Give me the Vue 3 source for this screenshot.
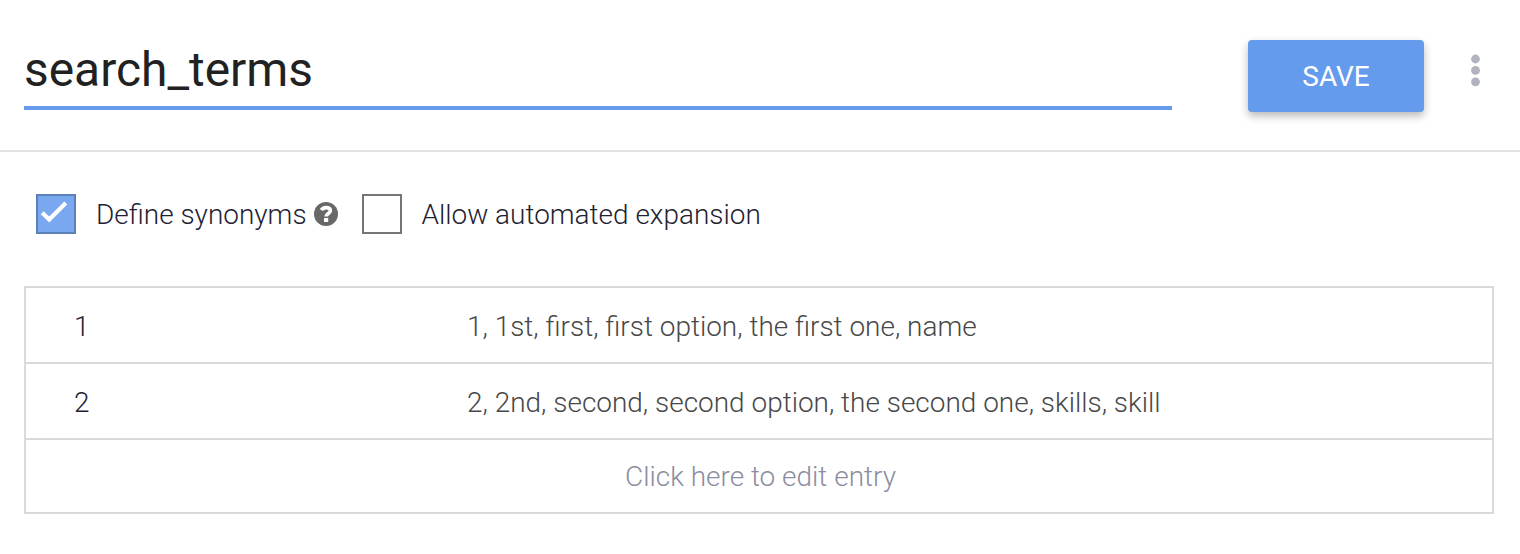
<script setup>
import { ref } from 'vue'

const name = 'search_terms'
const entries = ref([
  { value: '1', synonyms: '1, 1st, first, first option, the first one, name' },
  { value: '2', synonyms: '2, 2nd, second, second option, the second one, skills, skill' },
])
</script>

<template>
  <div class="page">
    <header class="head">
      <div class="title"><span>{{ name }}</span></div>
      <button class="save">SAVE</button>
      <svg class="more" width="12" height="36" viewBox="0 0 12 36">
        <circle cx="6.5" cy="6" r="4.4" />
        <circle cx="6.5" cy="17.4" r="4.4" />
        <circle cx="6.5" cy="28.8" r="4.4" />
      </svg>
    </header>
    <div class="options">
      <span class="box checked">
        <svg width="36" height="36" viewBox="0 0 36 36"><path d="M4.2 16.7 L11.2 23.5 L27.8 6.9" /></svg>
      </span>
      <span class="label define">Define synonyms</span>
      <svg class="help" width="24" height="24" viewBox="0 0 24 24">
        <circle cx="12" cy="12" r="12" />
        <path d="M7.4 8.2C9.4 4.5 16.5 4.7 16.3 8.9C16.1 11.4 12.1 11.6 12.1 14.6" />
        <rect x="10" y="16" width="4.2" height="4" />
      </svg>
      <span class="box"></span>
      <span class="label allow">Allow automated expansion</span>
    </div>
    <div class="table">
      <div v-for="e in entries" :key="e.value" class="row">
        <span class="value">{{ e.value }}</span>
        <span class="synonyms">{{ e.synonyms }}</span>
      </div>
      <div class="row add"><span>Click here to edit entry</span></div>
    </div>
  </div>
</template>

<style>
body { margin: 0; background: #fff; }
</style>

<style scoped>
.page { width: 1520px; height: 554px; box-sizing: border-box; font-family: Roboto, sans-serif; font-weight: 300; font-size: 27.96px; color: #1f2233; overflow: hidden; }
.head { display: flex; align-items: flex-start; height: 152px; box-sizing: border-box; padding: 30px 0 0 24px; border-bottom: 2px solid #e2e2e2; }
.title { width: 1148px; height: 80px; box-sizing: border-box; border-bottom: 4px solid #649bec; font-size: 47.9px; line-height: 80px; font-weight: 400; color: #212121; }
.save { margin: 10px 0 0 76px; width: 176px; height: 72px; padding: 2px 0 0; border: 0; border-radius: 4px; background: #649bec; color: #fff; font: 400 28px/70px Roboto, sans-serif; box-shadow: 0 4px 8px rgba(0, 0, 0, .28); }
.more { margin: 23px 0 0 45px; fill: #b1b3bf; }
.options { display: flex; align-items: center; height: 40px; margin: 42px 0 0 36px; }
.box { width: 40px; height: 40px; box-sizing: border-box; border: 2px solid #757575; flex: none; }
.checked { background: #79a7f0; border-color: #5c80b8; }
.checked path { fill: none; stroke: #fff; stroke-width: 4.2; }
.label { padding-top: 2px; line-height: 40px; white-space: nowrap; }
.define { width: 210px; margin-left: 20px; }
.help { margin: 0 24.5px 0 7.5px; fill: #686868; }
.help path { fill: none; stroke: #fff; stroke-width: 3.7; }
.help rect { fill: #fff; }
.allow { margin-left: 19.5px; }
.table { width: 1470px; box-sizing: border-box; margin: 52px 0 0 24px; border: 2px solid #dadada; }
.row { display: flex; height: 76px; box-sizing: border-box; border-bottom: 2px solid #dadada; line-height: 78px; }
.value { box-sizing: border-box; width: 441px; padding-left: 48px; }
.synonyms { color: #484848; }
.add { height: 72px; border: 0; padding-left: 3px; justify-content: center; color: #8b8da0; line-height: 74px; }
</style>
